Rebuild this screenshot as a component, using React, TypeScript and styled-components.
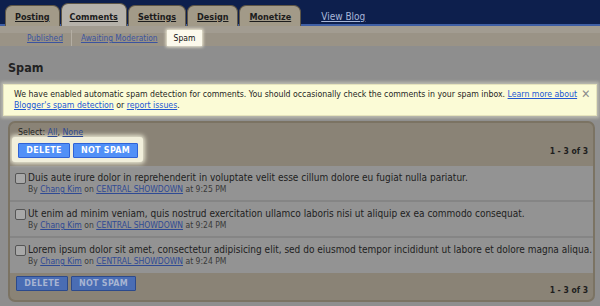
import React from 'react'
import styled, { createGlobalStyle } from 'styled-components'

const GlobalStyle = createGlobalStyle`
  html, body {
    margin: 0;
    padding: 0;
    background: #8e8e8e;
  }
  body {
    width: 600px;
    height: 306px;
    overflow: hidden;
    font-family: 'DejaVu Sans Condensed', 'DejaVu Sans', sans-serif;
    color: #1e1e1e;
  }
`

const TopBar = styled.div`
  height: 26px;
  background: #0d1f4d;
  display: flex;
  align-items: flex-end;
  padding-left: 5px;
  gap: 1px;
  box-shadow: inset 0 -2px 0 #3f5fa5;
`

const Tab = styled.a<{ $active?: boolean }>`
  height: ${(p) => (p.$active ? '23px' : '21px')};
  box-sizing: border-box;
  padding: 0 ${(p) => (p.$active ? '8px' : '9px')};
  display: flex;
  align-items: center;
  padding-top: ${(p) => (p.$active ? '3px' : '1px')};
  background: ${(p) => (p.$active ? '#b6b2aa' : '#a29a88')};
  border: 1px solid #5e5646;
  border-bottom: none;
  border-radius: 7px 7px 0 0;
  font-size: 9px;
  font-weight: bold;
  color: #1c1c1c;
  text-decoration: underline;
  white-space: nowrap;
`

const ViewBlog = styled.a`
  margin-left: 19px;
  align-self: center;
  margin-top: 7px;
  font-size: 10px;
  color: #a9b8da;
  text-decoration: underline;
`

const SubBar = styled.div`
  height: 20px;
  background: linear-gradient(#a29c91 0, #a29c91 7px, #9a9386 7px);
  display: flex;
  align-items: flex-end;
  padding-left: 27px;
`

const SubLink = styled.a<{ $sep?: boolean }>`
  height: 16px;
  display: flex;
  align-items: center;
  font-size: 8.3px;
  color: #3a53a0;
  text-decoration: underline;
  padding-right: ${(p) => (p.$sep ? '8px' : '0')};
  margin-right: 9px;
  border-right: ${(p) => (p.$sep ? '1px solid #b4aea3' : 'none')};
`

const SubActive = styled.span`
  height: 16px;
  display: flex;
  align-items: center;
  padding: 0 7px;
  background: #fcf9ec;
  box-shadow: 0 0 3px 1px #f6f2dc;
  font-size: 8.5px;
  color: #111;
`

const Content = styled.div`
  padding: 0 3px;
`

const Heading = styled.h1`
  margin: 0;
  padding: 14px 0 0 5px;
  height: 24px;
  font-size: 12.5px;
  font-weight: bold;
  color: #222;
`

const Notice = styled.div`
  display: flex;
  align-items: flex-start;
  background: #fbfbd6;
  border: 1px solid #e6e4bd;
  box-shadow: 0 0 3px 2px #bdbdb2;
  padding: 4px 7px 4px 10px;
  font-size: 8.7px;
  line-height: 11px;
  color: #1e1e1e;
`

const NoticeText = styled.div`
  flex: 1;
  white-space: nowrap;
`

const NoticeLink = styled.a`
  color: #2257d4;
  text-decoration: underline;
`

const Close = styled.span`
  color: #8c8c8c;
  font-size: 12px;
  line-height: 11px;
  margin-left: 4px;
`

const Panel = styled.div`
  margin: 5px 2px 0 5px;
  background: #8a8376;
  border: 2px solid #7b7363;
  border-radius: 7px;
  overflow: hidden;
`

const PanelBar = styled.div<{ $bottom?: boolean }>`
  display: flex;
  align-items: ${(p) => (p.$bottom ? 'flex-start' : 'flex-end')};
  justify-content: space-between;
  padding: ${(p) => (p.$bottom ? '3px 5px 5px 6px' : '4px 5px 4px 2px')};
`

const Select = styled.div`
  font-size: 8.8px;
  line-height: 10px;
  color: #222;
  padding-left: 6px;
`

const DimLink = styled.a`
  color: #2f4a94;
  text-decoration: underline;
`

const ButtonGlow = styled.div<{ $lit?: boolean }>`
  display: flex;
  gap: 3px;
  padding: ${(p) => (p.$lit ? '6px 5px 4px 6px' : '0')};
  background: ${(p) => (p.$lit ? '#f1efdb' : 'transparent')};
  border-radius: 3px;
  box-shadow: ${(p) => (p.$lit ? '0 0 4px 2px #e6e4cf' : 'none')};
`

const Button = styled.button<{ $dim?: boolean; $w: number }>`
  width: ${(p) => p.$w}px;
  height: 15px;
  padding: 0;
  background: ${(p) => (p.$dim ? '#4a6db4' : '#5190f7')};
  border: 1px solid ${(p) => (p.$dim ? '#2c4a8c' : '#2f62d6')};
  border-radius: 1px;
  color: ${(p) => (p.$dim ? '#a7b4d2' : '#fff')};
  font-family: 'DejaVu Sans', sans-serif;
  font-size: 8px;
  font-weight: bold;
  letter-spacing: 0.3px;
`

const Count = styled.div<{ $bottom?: boolean }>`
  font-size: 8.5px;
  line-height: 10px;
  font-weight: bold;
  color: #1e1e1e;
  margin: ${(p) => (p.$bottom ? '9px 0 0 0' : '0 0 6px 0')};
`

const Rows = styled.div`
  background: #939393;
`

const Row = styled.div`
  display: flex;
  gap: 2px;
  padding: 5px 6px 0 5px;
  height: 36px;
  box-sizing: border-box;
  border-bottom: 2px solid #858585;

  &:last-child {
    border-bottom: none;
    height: 35px;
  }
`

const Check = styled.span`
  width: 9px;
  height: 9px;
  margin-top: 2px;
  border: 1px solid #555;
  border-radius: 2px;
  background: #a8a8a8;
  flex: none;
`

const RowBody = styled.div`
  display: flex;
  flex-direction: column;
`

const Title = styled.div`
  font-size: 10px;
  line-height: 13px;
  color: #1e1e1e;
  white-space: nowrap;
`

const Meta = styled.div`
  font-size: 8.5px;
  line-height: 10px;
  color: #3a3a3a;
`

const comments = [
  {
    text: 'Duis aute irure dolor in reprehenderit in voluptate velit esse cillum dolore eu fugiat nulla pariatur.',
    time: '9:25 PM',
  },
  {
    text: 'Ut enim ad minim veniam, quis nostrud exercitation ullamco laboris nisi ut aliquip ex ea commodo consequat.',
    time: '9:24 PM',
  },
  {
    text: 'Lorem ipsum dolor sit amet, consectetur adipisicing elit, sed do eiusmod tempor incididunt ut labore et dolore magna aliqua.',
    time: '9:24 PM',
  },
]

const App = () => {
  return (
    <>
      <GlobalStyle />
      <TopBar>
        <Tab>Posting</Tab>
        <Tab $active>Comments</Tab>
        <Tab>Settings</Tab>
        <Tab>Design</Tab>
        <Tab>Monetize</Tab>
        <ViewBlog>View Blog</ViewBlog>
      </TopBar>
      <SubBar>
        <SubLink $sep>Published</SubLink>
        <SubLink>Awaiting Moderation</SubLink>
        <SubActive>Spam</SubActive>
      </SubBar>
      <Content>
        <Heading>Spam</Heading>
        <Notice>
          <NoticeText>
            We have enabled automatic spam detection for comments. You should occasionally check the
            comments in your spam inbox. <NoticeLink>Learn more about</NoticeLink>
            <br />
            <NoticeLink>Blogger's spam detection</NoticeLink> or <NoticeLink>report issues</NoticeLink>.
          </NoticeText>
          <Close>✕</Close>
        </Notice>
        <Panel>
          <PanelBar>
            <div>
              <Select>
                Select: <DimLink>All</DimLink>, <DimLink>None</DimLink>
              </Select>
              <ButtonGlow $lit>
                <Button $w={52}>DELETE</Button>
                <Button $w={65}>NOT SPAM</Button>
              </ButtonGlow>
            </div>
            <Count>1 - 3 of 3</Count>
          </PanelBar>
          <Rows>
            {comments.map((c, i) => (
              <Row key={i}>
                <Check />
                <RowBody>
                  <Title>{c.text}</Title>
                  <Meta>
                    By <DimLink>Chang Kim</DimLink> on <DimLink>CENTRAL SHOWDOWN</DimLink> at {c.time}
                  </Meta>
                </RowBody>
              </Row>
            ))}
          </Rows>
          <PanelBar $bottom>
            <ButtonGlow>
              <Button $dim $w={52}>DELETE</Button>
              <Button $dim $w={65}>NOT SPAM</Button>
            </ButtonGlow>
            <Count $bottom>1 - 3 of 3</Count>
          </PanelBar>
        </Panel>
      </Content>
    </>
  )
}

export default App
